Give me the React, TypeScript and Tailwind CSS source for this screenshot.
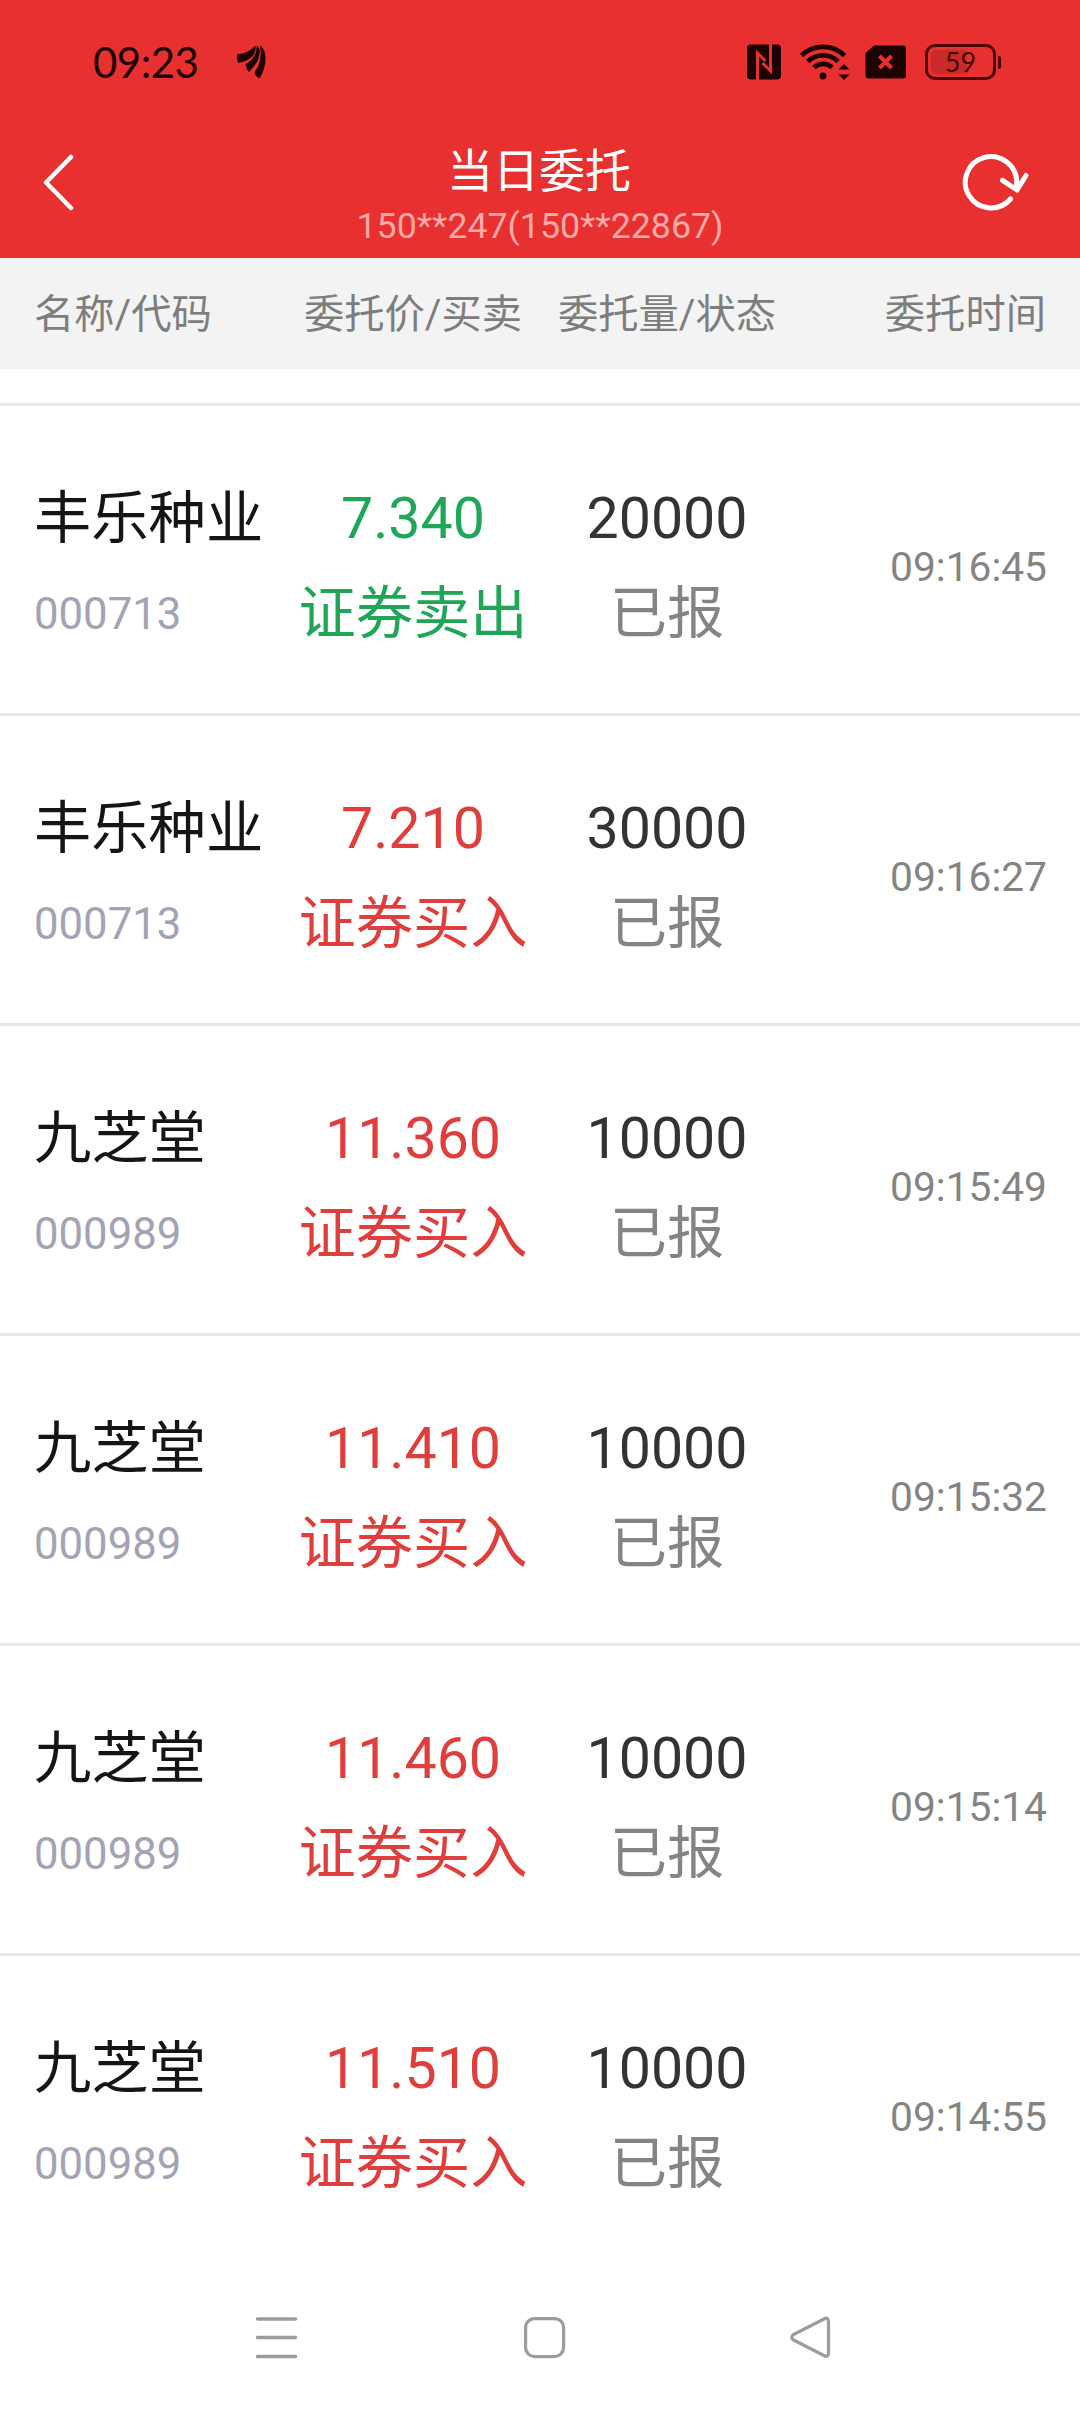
type Order = {
  name: string;
  code: string;
  price: string;
  side: "buy" | "sell";
  amount: string;
  status: string;
  time: string;
};

const orders: Order[] = [
  { name: "丰乐种业", code: "000713", price: "7.340", side: "sell", amount: "20000", status: "已报", time: "09:16:45" },
  { name: "丰乐种业", code: "000713", price: "7.210", side: "buy", amount: "30000", status: "已报", time: "09:16:27" },
  { name: "九芝堂", code: "000989", price: "11.360", side: "buy", amount: "10000", status: "已报", time: "09:15:49" },
  { name: "九芝堂", code: "000989", price: "11.410", side: "buy", amount: "10000", status: "已报", time: "09:15:32" },
  { name: "九芝堂", code: "000989", price: "11.460", side: "buy", amount: "10000", status: "已报", time: "09:15:14" },
  { name: "九芝堂", code: "000989", price: "11.510", side: "buy", amount: "10000", status: "已报", time: "09:14:55" },
];

const StatusBar = () => (
  <div className="flex h-[108px] items-center pl-[93px] pr-[79px] pt-[16px] text-[#1d0202]">
    <span className="font-['Lato',sans-serif] text-[42px] leading-[48px] tracking-[-0.500px]">09:23</span>

    {/* carrier / app notification mark */}
    <svg className="ml-[38px] h-[34px] w-[32px]" viewBox="0 0 32 34" fill="currentColor">
      <path d="M1 9.500Q13 8 19.500 0.500Q20.500 5 17.500 10Q13 16 2 18Q1 14 1 9.500Z" />
      <path d="M20.800 0.500Q23.500 2 23.800 6Q23.500 14 19 20L13 27Q10 24 9.500 19Q21 13 20.800 0.500Z" />
      <path d="M24 0.500Q29 4 29.500 12Q30 23 23.500 33.500Q19 31 18.500 27Q27 17 24 0.500Z" />
    </svg>

    <div className="ml-auto flex items-center">
      {/* NFC */}
      <svg className="h-[36px] w-[36px]" viewBox="0 0 36 36">
        <rect x="1" y="0.500" width="34" height="35" rx="4" fill="currentColor" />
        <path d="M11.500 36V9L19.500 17M24.500 0V27L16.500 19" fill="none" stroke="#e93030" strokeWidth="3" />
      </svg>

      {/* wifi with traffic arrows */}
      <svg className="ml-[18px] h-[44px] w-[52px]" viewBox="0 0 52 44">
        <g fill="none" stroke="currentColor" strokeWidth="4.800">
          <path d="M1.500 15.500A31 31 0 0 1 44.500 15.500" />
          <path d="M7.800 21.500A22 22 0 0 1 38.200 21.500" />
          <path d="M14 27.500A13 13 0 0 1 32 27.500" />
        </g>
        <circle cx="23" cy="36" r="3.400" fill="currentColor" />
        <path d="M44 24L49.500 29.500H38.500ZM44 40L49.500 34.500H38.500Z" fill="currentColor" />
      </svg>

      {/* no SIM */}
      <svg className="ml-[13px] h-[34px] w-[42px]" viewBox="0 0 42 34">
        <path d="M9 0.500H38Q41 0.500 41 3.500V30.500Q41 33.500 38 33.500H3.500Q0.500 33.500 0.500 30.500V8Z" fill="currentColor" />
        <path d="M14.500 11L26.500 23M26.500 11L14.500 23" stroke="#e93030" strokeWidth="4" />
      </svg>

      {/* battery */}
      <div className="ml-[18px] flex items-center">
        <div className="relative flex h-[36px] w-[71px] items-center justify-center rounded-[10px] border-[3px] border-[#4a0606]">
          <div className="absolute left-[3px] top-[3px] h-[24px] w-[36px] rounded-l-[5px] bg-[#c92a2a]" />
          <span className="relative font-['Lato',sans-serif] text-[27px] leading-[30px] text-[#4a0606]">59</span>
        </div>
        <div className="ml-[2px] h-[13px] w-[3px] rounded-r-[2px] bg-[#4a0606]" />
      </div>
    </div>
  </div>
);

const TitleBar = () => (
  <div className="flex h-[150px] items-start justify-between pl-[42px] pr-[48px]">
    <svg className="mt-[45px] h-[58px] w-[78px]" viewBox="0 0 78 58" fill="none" stroke="#fff" strokeWidth="4.500" strokeLinecap="round" strokeLinejoin="round">
      <path d="M29 4L4 29.500L29 55" />
    </svg>

    <div className="text-center">
      <h1 className="mt-[33px] pr-[2px] text-[46px] leading-[60px] text-white">当日委托</h1>
      <p className="mt-[-2px] text-[35.700px] leading-[54px] text-[#ffa9a9]">150**247(150**22867)</p>
    </div>

    <svg className="mt-[45px] h-[60px] w-[72px]" viewBox="0 0 72 60" fill="none" stroke="#fff" strokeWidth="5" strokeLinecap="round" strokeLinejoin="round">
      <path d="M50.500 46A25.700 25.700 0 1 1 56.700 29.300V36" />
      <path d="M42.500 27.300L57 37L66 22.500" />
    </svg>
  </div>
);

const OrderRow = ({ order }: { order: Order }) => {
  const sideColor = order.side === "buy" ? "text-[#e03e3c]" : "text-[#1fa658]";

  return (
    <li className="grid h-[310px] grid-cols-[286px_254px_254px_1fr] border-t-[3px] border-[#e7e7e7] pt-[73px] text-[57.300px] leading-[80px]">
      <div className="pl-[34px]">
        <div className="text-[#151515]">{order.name}</div>
        <div className="mt-[15px] text-[43.700px] leading-[80px] text-[#a3a3b3]">{order.code}</div>
      </div>
      <div className={`text-center whitespace-nowrap ${sideColor}`}>
        <div>{order.price}</div>
        <div className="mt-[15px]">{order.side === "buy" ? "证券买入" : "证券卖出"}</div>
      </div>
      <div className="text-center">
        <div className="text-[#333333]">{order.amount}</div>
        <div className="mt-[15px] text-[#848484]">{order.status}</div>
      </div>
      <div className="pr-[33px] pt-[48px] text-right text-[40.700px] text-[#848484]">{order.time}</div>
    </li>
  );
};

const NavBar = () => (
  <nav className="mt-auto flex h-[149px] items-start justify-between pl-[255px] pr-[248px] pt-[53px]">
    <svg className="h-[43px] w-[43px]" viewBox="0 0 43 43" stroke="#9c9c9c" strokeWidth="3.600" strokeLinecap="round">
      <path d="M2.500 3H40.500M2.500 21.500H40.500M2.500 40.500H40.500" />
    </svg>
    <svg className="h-[43px] w-[44px]" viewBox="0 0 44 43" fill="none" stroke="#9c9c9c" strokeWidth="3.200">
      <rect x="3.600" y="2.600" width="38" height="38" rx="9" />
    </svg>
    <svg className="h-[43px] w-[43px]" viewBox="0 0 43 43" fill="none" stroke="#9c9c9c" strokeWidth="3.200" strokeLinejoin="round">
      <path d="M35 3Q39.500 0.500 39.500 6V36.500Q39.500 42 35 39.500L4.500 24Q1 21.500 4.500 18.500Z" />
    </svg>
  </nav>
);

const App = () => {
  return (
    <div className="flex h-[2412px] w-[1080px] flex-col overflow-hidden bg-white font-['Roboto','Noto_Sans_CJK_SC',sans-serif]">
      <header className="h-[258px] bg-[#e93030]">
        <StatusBar />
        <TitleBar />
      </header>

      <div className="grid h-[111px] grid-cols-[286px_254px_254px_1fr] bg-[#f3f3f3] text-[40.300px] leading-[113px] text-[#7d7d7d]">
        <div className="pl-[34px]">名称/代码</div>
        <div className="text-center">委托价/买卖</div>
        <div className="text-center">委托量/状态</div>
        <div className="pr-[34px] text-right">委托时间</div>
      </div>

      <ul className="mt-[34px]">
        {orders.map((order) => (
          <OrderRow key={order.time} order={order} />
        ))}
      </ul>

      <NavBar />
    </div>
  );
};

export default App;
